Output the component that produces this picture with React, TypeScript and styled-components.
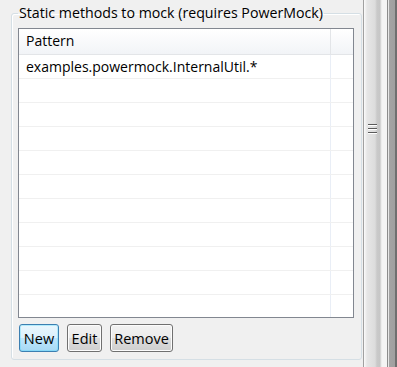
import React from 'react';
import styled, { createGlobalStyle } from 'styled-components';

const GlobalStyle = createGlobalStyle`
  html, body {
    margin: 0;
    padding: 0;
    background: #f0f0f0;
  }
  * {
    box-sizing: border-box;
  }
`;

export const Screen = styled.div`
  display: flex;
  width: 397px;
  height: 367px;
  overflow: hidden;
  background: #f0f0f0;
  font-family: "Open Sans", "Noto Sans", sans-serif;
  font-size: 14px;
  color: #000;
`;

export const Panel = styled.div`
  flex: 0 0 362px;
  padding: 3px 0 0 11px;
`;

export const GroupBox = styled.fieldset`
  margin: 0;
  width: 351px;
  height: 357px;
  padding: 5px 7px 0 6px;
  border: 1px solid #d5dfe5;
  border-radius: 3px;
  box-shadow: inset 1px 1px 0 #ffffff;
  display: flex;
  flex-direction: column;
`;

export const GroupTitle = styled.legend`
  padding: 0 1px;
  margin-left: 0;
  line-height: 20px;
  height: 20px;
  font-size: 14.2px;
  white-space: nowrap;
`;

export const Table = styled.div`
  height: 290px;
  flex: 0 0 290px;
  border: 1px solid #828790;
  background: #ffffff;
  overflow: hidden;
  display: flex;
  flex-direction: column;
`;

export const HeaderRow = styled.div`
  display: grid;
  grid-template-columns: 312px 1fr;
  height: 26px;
  flex: 0 0 26px;
  background: linear-gradient(#ffffff, #f2f4f7);
  border-bottom: 1px solid #e3e5e8;
`;

export const HeaderCell = styled.div`
  padding-left: 7px;
  line-height: 24px;
  border-right: 1px solid #e3e5e8;
`;

export const Row = styled.div`
  display: grid;
  grid-template-columns: 312px 1fr;
  height: 24px;
  flex: 0 0 24px;
  border-bottom: 1px solid #f0f0f0;
`;

export const Cell = styled.div`
  padding-left: 7px;
  line-height: 23px;
  border-right: 1px solid #e9eef6;
  white-space: nowrap;
`;

export const ButtonBar = styled.div`
  display: flex;
  gap: 8px;
  margin-top: 6px;
  padding-left: 1px;
`;

export const Button = styled.button<{ $focused?: boolean; $width: number }>`
  height: 28px;
  width: ${p => p.$width}px;
  padding: 0;
  font-family: inherit;
  font-size: 14.5px;
  color: #000;
  border-radius: 3px;
  border: 1px solid ${p => (p.$focused ? '#3c7fb1' : '#707070')};
  background: ${p =>
    p.$focused
      ? 'linear-gradient(#eaf6fd 0%, #d9f0fc 50%, #bee6fd 51%, #a7d9f5 100%)'
      : 'linear-gradient(#f2f2f2 0%, #ebebeb 50%, #dddddd 51%, #cfcfcf 100%)'};
  box-shadow: inset 0 0 0 1px ${p => (p.$focused ? '#48d8fb55' : '#fcfcfc')};
`;

export const Sash = styled.div`
  position: relative;
  flex: 1;
  height: 100%;
  background: linear-gradient(
    to right,
    #f0f0f0 0px,
    #f0f0f0 1px,
    #a0a0a0 1px,
    #a0a0a0 2px,
    #fbfbfb 2px,
    #e6e6e6 5px,
    #dcdcdc 13px,
    #c9c9c9 15px,
    #c6c6c6 18px,
    #e4e4e4 19px,
    #f4f4f4 20px,
    #f4f4f4 25px,
    #8c8c8c 25px,
    #8c8c8c 26px,
    #e6e6e6 26px,
    #e6e6e6 27px,
    #a4a4a4 27px,
    #a0a0a0 33px,
    #6f6f6f 33px
  );
`;

export const Grip = styled.svg`
  position: absolute;
  left: 6px;
  top: 123px;
`;

const rows = Array.from({ length: 12 }, (_, i) =>
  i === 0 ? 'examples.powermock.InternalUtil.*' : ''
);

export default function App() {
  return (
    <Screen>
      <GlobalStyle />
      <Panel>
        <GroupBox>
          <GroupTitle>Static methods to mock (requires PowerMock)</GroupTitle>

          <Table>
            <HeaderRow>
              <HeaderCell>Pattern</HeaderCell>
              <div />
            </HeaderRow>

            {rows.map((text, i) => (
              <Row key={i}>
                <Cell>{text}</Cell>
                <div />
              </Row>
            ))}
          </Table>

          <ButtonBar>
            <Button $focused $width={40}>New</Button>
            <Button $width={35}>Edit</Button>
            <Button $width={63}>Remove</Button>
          </ButtonBar>
        </GroupBox>
      </Panel>

      <Sash>
        <Grip width='10' height='12' viewBox='0 0 10 12'>
          <rect x='0' y='1' width='9' height='1' fill='#5a5a5a' />
          <rect x='0' y='2' width='9' height='1' fill='#ffffff' />
          <rect x='0' y='5' width='9' height='1' fill='#5a5a5a' />
          <rect x='0' y='6' width='9' height='1' fill='#ffffff' />
          <rect x='0' y='9' width='9' height='1' fill='#5a5a5a' />
          <rect x='0' y='10' width='9' height='1' fill='#ffffff' />
        </Grip>
      </Sash>
    </Screen>
  );
}
